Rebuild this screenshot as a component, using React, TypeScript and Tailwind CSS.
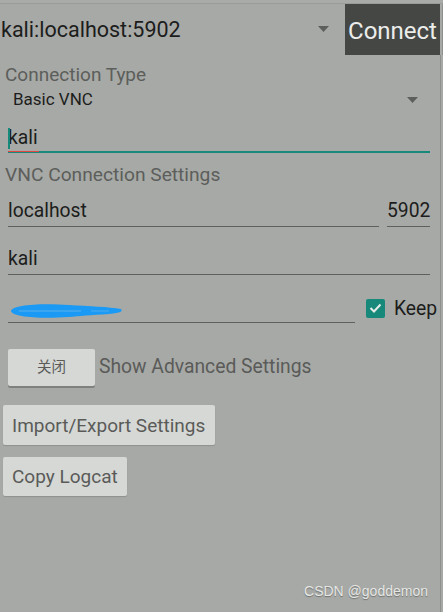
import React from "react";

const Tri = () => (
  <svg width="11" height="6" viewBox="0 0 11 6"><path d="M0 0h11L5.5 6z" fill="#5d5f5c" /></svg>
);

export default function App() {
  return (
    <div className="relative w-[443px] h-[612px] overflow-hidden bg-[#a7a9a6]" style={{ fontFamily: "Roboto, 'Noto Sans CJK SC', sans-serif" }}>
      <div className="h-[4px] bg-[#a9aba8] border-b border-[#9a9c99]" />
      <div className="flex h-[51px] pr-[2px] border-r border-[#8e908d]">
        <div className="flex-1 flex items-center">
          <span className="ml-[1px] text-[21.5px] text-[#1c1d1c] leading-none">kali:localhost:5902</span>
          <span className="ml-auto mr-[16px] mb-[2px] flex"><Tri /></span>
        </div>
        <div className="w-[95px] bg-[#454744] flex items-center justify-center text-[24px] text-[#ecedeb] leading-none pt-[2px]">Connect</div>
      </div>
      <div className="border-r border-[#8e908d] mr-[2px] h-[557px]">
        <div className="pl-[5px] pt-[10px] text-[19px] leading-[20px] text-[#5c5e5b]">Connection Type</div>
        <div className="flex items-center pl-[13px] pr-[22px] h-[24px] mt-[3px]">
          <span className="text-[17px] text-[#1c1d1c]">Basic VNC</span>
          <span className="ml-auto flex"><Tri /></span>
        </div>
        <div className="ml-[8px] mr-[10px] mt-[13px] h-[28px] border-b-2 border-[#16897a] relative flex items-center">
          <span className="relative text-[19.3px] text-[#1c1d1c] leading-none">
            kali
            <span className="absolute left-0 right-[-1px] -bottom-[4px] h-[1px] bg-[#e0453f]" />
          </span>
          <span className="absolute left-0 top-[3px] w-[2px] h-[21px] bg-[#16897a]" />
        </div>
        <div className="pl-[5px] pt-[12px] text-[19.2px] leading-[20px] text-[#5c5e5b]">VNC Connection Settings</div>
        <div className="flex gap-[8px] ml-[8px] mr-[10px] mt-[12px]">
          <div className="flex-1 h-[30px] border-b border-[#5e605d] flex items-center text-[19.3px] text-[#1c1d1c]">localhost</div>
          <div className="w-[43px] h-[30px] border-b border-[#5e605d] flex items-center text-[19.3px] text-[#1c1d1c]">5902</div>
        </div>
        <div className="ml-[8px] mr-[10px] mt-[18px] h-[30px] border-b border-[#5e605d] flex items-center text-[19.3px] text-[#1c1d1c]">kali</div>
        <div className="flex items-end mt-[17px] ml-[8px]">
          <div className="w-[347px] h-[31px] border-b border-[#5e605d] relative">
            <svg className="absolute left-[1px] top-[10px]" width="114" height="18" viewBox="0 0 114 18">
              <path d="M2 9C3 3 30 1 60 3C80 4 100 5 112 7C114 9 112 11 100 12C82 13 70 14 60 15C30 17 3 15 2 9Z" fill="#1a9af5" />
              <path d="M10 9H72" stroke="#6fb6e6" strokeWidth="0.8" />
              <path d="M82 9H100" stroke="#6fb6e6" strokeWidth="0.6" />
            </svg>
          </div>
          <div className="ml-[11px] mb-[5px] flex items-center">
            <div className="w-[19px] h-[19px] rounded-[2px] bg-[#16897a] flex items-center justify-center">
              <svg width="13" height="10" viewBox="0 0 13 10"><path d="M1.5 5L5 8.5L11.5 1.5" stroke="#e6ecea" strokeWidth="2" fill="none" /></svg>
            </div>
            <span className="ml-[9px] text-[19.3px] text-[#1c1d1c] leading-none">Keep</span>
          </div>
        </div>
        <div className="flex items-center mt-[26px] ml-[8px]">
          <div className="w-[87px] h-[37px] bg-[#d6d8d5] rounded-[2px] shadow-[0_2px_0_#7f817e] flex items-center justify-center text-[14.5px] text-[#5a5b59]">关闭</div>
          <span className="ml-[4px] text-[19.3px] text-[#5a5b59]">Show Advanced Settings</span>
        </div>
        <div className="ml-[3px] mt-[19px] w-[212px] h-[40px] bg-[#d6d8d5] rounded-[2px] shadow-[0_1px_1px_#8f918e] flex items-center pl-[9px] pt-[2px] text-[19px] text-[#5a5b59]">Import/Export Settings</div>
        <div className="ml-[3px] mt-[12px] w-[124px] h-[39px] bg-[#d6d8d5] rounded-[2px] shadow-[0_1px_1px_#8f918e] flex items-center pl-[9px] pt-[2px] text-[19px] text-[#5a5b59]">Copy Logcat</div>
      </div>
      <div className="absolute right-[15px] bottom-[10px] text-[14px] text-[#e6e7e5] [text-shadow:0_1px_1px_#6f716e]" style={{ fontFamily: "'Liberation Sans', sans-serif" }}>CSDN @goddemon</div>
    </div>
  );
}
